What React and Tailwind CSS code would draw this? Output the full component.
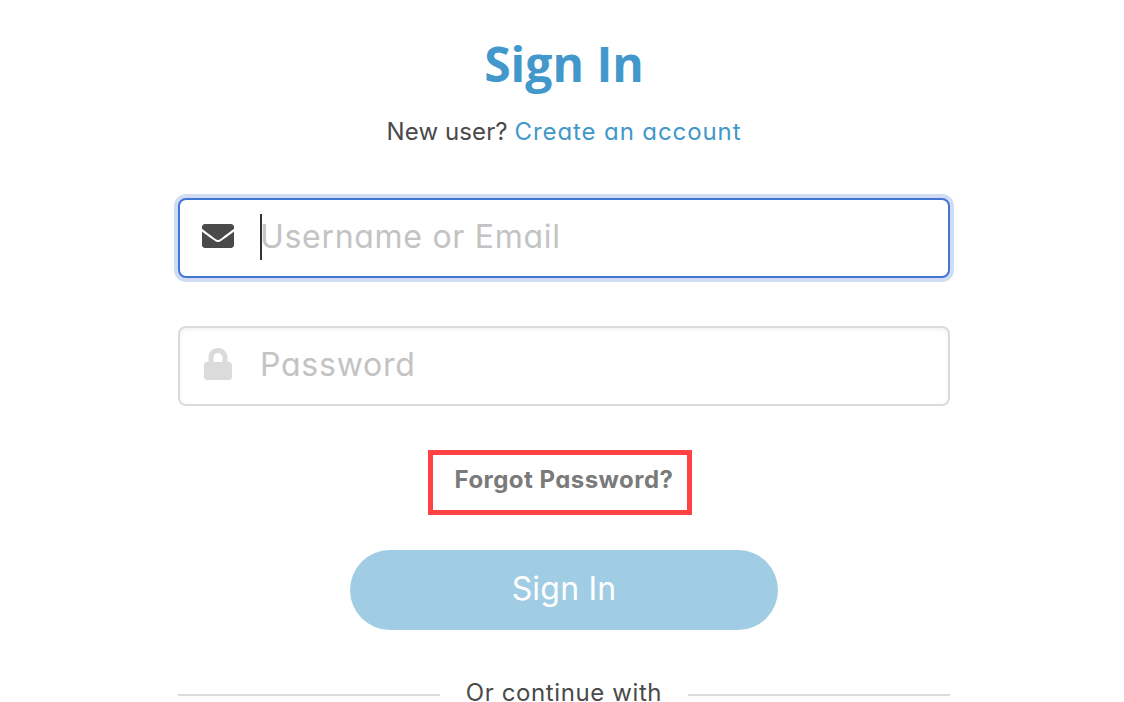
import { FaEnvelope, FaLock } from "react-icons/fa";

function Field({ icon, label, active }) {
  return (
    <div
      className={
        active
          ? "flex h-20 w-full items-center rounded-lg border-2 border-[#4275d3] bg-white pb-0.5 pl-[22px] ring-4 ring-[#d0dcf4]"
          : "flex h-20 w-full items-center rounded-lg border-2 border-[#dbdbdb] bg-white pb-0.5 pl-[22px] shadow-[inset_0_2px_4px_rgba(10,10,10,0.05)]"
      }
    >
      <span className={active ? "mb-0.5 flex w-8 justify-center text-[#4a4a4a]" : "mb-0.5 flex w-8 justify-center text-[#dbdbdb]"}>
        {icon}
      </span>
      <span className={active ? "ml-[26px] h-[46px] w-0.5 bg-[#333333]" : "ml-[26px] h-[46px] w-0.5"} />
      <span
        className={
          active
            ? "-ml-0.5 whitespace-nowrap text-[32px] leading-[46px] font-normal tracking-[0.7px] text-[#c3c3c3]"
            : "-ml-0.5 whitespace-nowrap text-[32px] leading-[46px] font-normal tracking-[0.75px] text-[#c3c3c3]"
        }
      >
        {label}
      </span>
    </div>
  );
}

export default function App() {
  return (
    <main className="h-[702px] w-[1124px] overflow-hidden bg-white pl-[178px] font-['Inter',sans-serif] text-[#4a4a4a] [font-feature-settings:'cv11']">
      <div className="flex w-[772px] flex-col items-center">
        <h1 className="mt-[29px] h-[70px] font-['Open_Sans',sans-serif] text-[48px] leading-[70px] font-bold text-[#4298ca]">
          Sign In
        </h1>
        <p className="mt-[15px] h-9 whitespace-nowrap text-[24px] leading-9 font-normal">
          <span className="tracking-[0.1px]">New user? </span>
          <a className="tracking-[0.9px] text-[#4298ca]">Create an account</a>
        </p>
        <div className="mt-12 flex w-full flex-col gap-12">
          <Field icon={<FaEnvelope size={32} />} label="Username or Email" active />
          <Field icon={<FaLock size={32} />} label="Password" />
        </div>
        <a className="mt-11 mr-2 flex h-[65px] w-[264px] items-start justify-center border-[5px] border-[#ff4343] pt-[7px] pl-2 text-[24px] leading-9 font-bold tracking-[0.45px] whitespace-nowrap text-[#7a7a7a]">
          Forgot Password?
        </a>
        <button className="mt-[35px] flex h-20 w-[428px] items-center justify-center rounded-full bg-[#a0cce4] pb-0.5 text-[32px] font-normal tracking-[0.2px] text-white">
          Sign In
        </button>
        <div className="mt-[53px] flex h-5 w-full items-center justify-between">
          <span className="mt-[3px] h-0.5 w-[262px] bg-[#dbdbdb]" />
          <span className="text-[24px] leading-5 font-normal tracking-[0.6px] whitespace-nowrap">Or continue with</span>
          <span className="mt-[3px] h-0.5 w-[262px] bg-[#dbdbdb]" />
        </div>
      </div>
    </main>
  );
}
